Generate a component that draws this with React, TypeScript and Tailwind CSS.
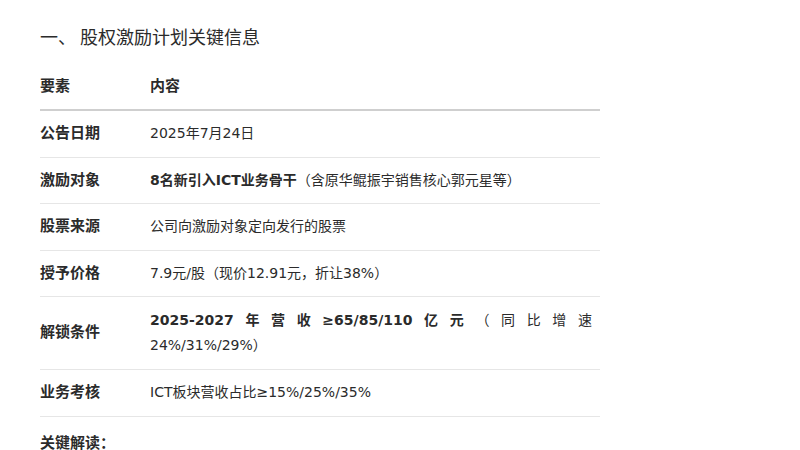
const ROWS: { label: string; content: React.ReactNode; tall?: boolean }[] = [
  { label: "公告日期", content: "2025年7月24日" },
  {
    label: "激励对象",
    content: (
      <>
        <strong className="font-bold">8名新引入ICT业务骨干</strong>（含原华鲲振宇销售核心郭元星等）
      </>
    ),
  },
  { label: "股票来源", content: "公司向激励对象定向发行的股票" },
  { label: "授予价格", content: "7.9元/股（现价12.91元，折让38%）" },
  {
    label: "解锁条件",
    tall: true,
    content: (
      <>
        <span className="block [text-align-last:justify]">
          <strong className="font-bold">2025-2027年营收≥65/85/110亿元</strong>（同比增速
        </span>
        <span className="block">24%/31%/29%）</span>
      </>
    ),
  },
  { label: "业务考核", content: "ICT板块营收占比≥15%/25%/35%" },
];

export default function App() {
  return (
    <div
      className="min-h-[450px] bg-white px-10 text-[#2b2b2b]"
      style={{ fontFamily: '"DejaVu Sans", "Noto Sans CJK SC", sans-serif' }}
    >
      <h2
        className="pt-[22px] text-[18px] leading-[28px] font-normal"
        style={{ fontFamily: '"Noto Sans CJK SC", sans-serif' }}
      >
        一、 股权激励计划关键信息
      </h2>

      <table className="mt-3 w-[560px] border-collapse text-left text-sm">
        <thead>
          <tr className="border-b-2 border-[#cfcfcf]">
            <th className="w-[110px] pt-3 pb-[11px] text-[15px] leading-6 font-bold">要素</th>
            <th className="pt-3 pb-[11px] text-[15px] leading-6 font-bold">内容</th>
          </tr>
        </thead>
        <tbody>
          {ROWS.map((r) => (
            <tr key={r.label} className="border-b border-[#e6e6e6]">
              <td className="py-[11px] align-middle text-[15px] leading-[23.5px] font-bold">{r.label}</td>
              <td className={`py-[11px] pr-2 text-justify ${r.tall ? "leading-[25px]" : "leading-[23.5px]"}`}>
                {r.content}
              </td>
            </tr>
          ))}
        </tbody>
      </table>

      <p className="mt-[14px] text-[15px] leading-6 font-bold">关键解读：</p>
    </div>
  );
}
